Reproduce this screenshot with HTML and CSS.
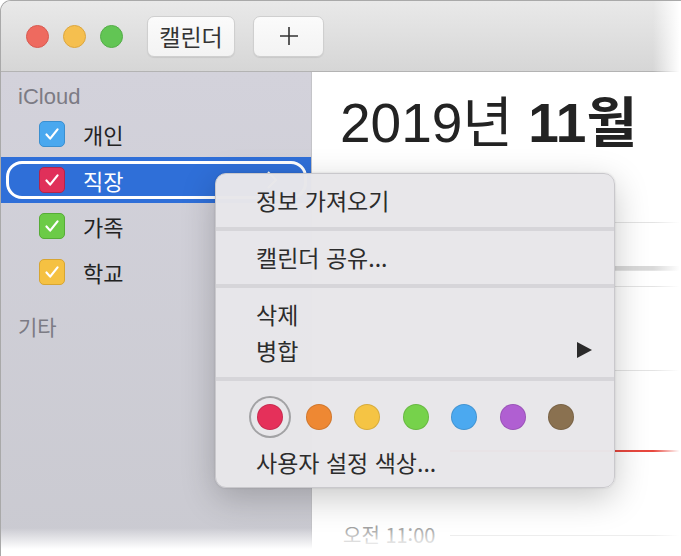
FILE: index.html
```html
<!DOCTYPE html>
<html lang="ko">
<head>
    <meta charset="UTF-8">
    <title>캘린더</title>
    <link rel="stylesheet" href="styles.css">
</head>
<body>
  <div class="window">
    <header class="titlebar">
      <div class="lights">
        <span class="light red"></span>
        <span class="light yellow"></span>
        <span class="light green"></span>
      </div>
      <button class="tb-btn cal-btn">캘린더</button>
      <button class="tb-btn add-btn">
        <svg width="22" height="22" viewBox="0 0 22 22"><path d="M11 2v18M2 11h18" stroke="#333" stroke-width="1.6" fill="none"/></svg>
      </button>
    </header>

    <div class="content">
      <aside class="sidebar">
        <div class="group-title">iCloud</div>
        <div class="cal-row">
          <span class="check blue"><svg viewBox="0 0 26 26"><path d="M7 13.5l4 4.5 8-10" /></svg></span>
          <span class="cal-name">개인</span>
        </div>
        <div class="cal-row selected">
          <span class="check red"><svg viewBox="0 0 26 26"><path d="M7 13.5l4 4.5 8-10" /></svg></span>
          <span class="cal-name">직장</span>
          <svg class="chevron" width="12" height="20" viewBox="0 0 12 20"><path d="M2 2l8 8-8 8" /></svg>
        </div>
        <div class="cal-row">
          <span class="check green"><svg viewBox="0 0 26 26"><path d="M7 13.5l4 4.5 8-10" /></svg></span>
          <span class="cal-name">가족</span>
        </div>
        <div class="cal-row">
          <span class="check yellow"><svg viewBox="0 0 26 26"><path d="M7 13.5l4 4.5 8-10" /></svg></span>
          <span class="cal-name">학교</span>
        </div>
        <div class="group-title other">기타</div>
      </aside>

      <main class="day-view">
        <h1 class="month-title">2019년 <b>11월</b></h1>
        <div class="all-day"></div>
        <div class="hour h1"></div>
        <div class="hour h2"></div>
        <div class="hour h3"></div>
        <div class="hour h4 now"></div>
        <div class="hour h5">
          <span class="time">오전 11:00</span>
        </div>
      </main>
    </div>

    <!-- context menu for 직장 -->
    <div class="menu">
      <div class="menu-item">정보 가져오기</div>
      <div class="menu-sep"></div>
      <div class="menu-item">캘린더 공유...</div>
      <div class="menu-sep"></div>
      <div class="menu-item">삭제</div>
      <div class="menu-item">병합 <span class="arrow"></span></div>
      <div class="menu-sep"></div>
      <div class="swatches">
        <span class="swatch current" style="background:#e5305a"></span>
        <span class="swatch" style="background:#ee8833"></span>
        <span class="swatch" style="background:#f5c444"></span>
        <span class="swatch" style="background:#76d24b"></span>
        <span class="swatch" style="background:#4ba9f0"></span>
        <span class="swatch" style="background:#b05fd2"></span>
        <span class="swatch" style="background:#8a7150"></span>
      </div>
      <div class="menu-item last">사용자 설정 색상...</div>
    </div>

    <div class="fade-right"></div>
    <div class="fade-bottom"></div>
  </div>
</body>
</html>
```

FILE: styles.css
```css
/* Page */
body {
  margin: 0;
  background: #fff;
  font-family: "Liberation Sans", "Noto Sans CJK KR", sans-serif;
  color: #222;
  width: 681px;
  height: 556px;
  overflow: hidden;
}

.window {
  position: relative;
  width: 681px;
  height: 556px;
  border-top-left-radius: 11px;
  border-left: 1px solid #a9a9a9;
  border-top: 1px solid #a9a9a9;
  box-sizing: border-box;
  overflow: hidden;
}

/* Title bar */
.titlebar {
  height: 70px;
  border-bottom: 1px solid #b3b3b3;
  background: linear-gradient(#e9e9e9, #d6d6d6);
  display: flex;
  align-items: center;
  padding-left: 25px;
}

.lights {
  display: flex;
  gap: 14px;
  margin-right: 24px;
}

.light {
  width: 23px;
  height: 23px;
  border-radius: 50%;
  box-sizing: border-box;
}

.light.red { background: #ee6a5f; border: 1px solid #d85a50; }
.light.yellow { background: #f5bf4f; border: 1px solid #dca63e; }
.light.green { background: #62c554; border: 1px solid #53ad47; }

.tb-btn {
  height: 41px;
  margin-right: 18px;
  border: 1px solid #cfcfcf;
  border-radius: 7px;
  background: linear-gradient(#fbfbfb, #f3f3f3);
  box-shadow: 0 1px 1px rgba(0,0,0,0.08);
  font-family: "Noto Sans CJK KR", sans-serif;
  font-size: 23px;
  color: #333;
  display: flex;
  align-items: center;
  justify-content: center;
  padding: 0;
}

.cal-btn { width: 88px; }
.add-btn { width: 71px; }

/* Body */
.content {
  display: flex;
  height: 484px;
}

.sidebar {
  width: 310px;
  background: linear-gradient(#d3d2db, #cacad1);
  border-right: 1px solid #c4c4c8;
  padding-top: 12px;
  font-family: "Noto Sans CJK KR", sans-serif;
}

.group-title {
  font-family: "Liberation Sans", "Noto Sans CJK KR", sans-serif;
  font-size: 22px;
  line-height: 26px;
  color: #7c7b84;
  padding-left: 17px;
  margin-bottom: 1px;
}

.group-title.other {
  font-family: "Noto Sans CJK KR", sans-serif;
  margin-top: 18px;
  font-size: 21px;
}

.cal-row {
  position: relative;
  height: 46px;
  display: flex;
  align-items: center;
  padding-left: 38px;
}

.cal-row.selected {
  background: #2f6fd8;
  color: #fff;
}

.cal-row.selected::after {
  content: "";
  position: absolute;
  top: 4px;
  bottom: 4px;
  left: 5px;
  right: 4px;
  border: 3px solid #fff;
  border-radius: 16px;
}

.check {
  width: 26px;
  height: 26px;
  border-radius: 5px;
  box-sizing: border-box;
  margin-right: 18px;
}

.check svg {
  display: block;
  width: 100%;
  height: 100%;
  fill: none;
  stroke: #fff;
  stroke-width: 2.4;
  stroke-linecap: round;
  stroke-linejoin: round;
}

.check.blue { background: #4aa8ef; border: 1px solid #3a8fd0; }
.check.red { background: #e0305a; border: 1px solid #b3244a; }
.check.green { background: #6ccb47; border: 1px solid #56ac37; }
.check.yellow { background: #f5c142; border: 1px solid #d7a532; }

.cal-name {
  font-size: 22px;
}

.chevron {
  margin-left: auto;
  margin-right: 33px;
  fill: none;
  stroke: #fff;
  stroke-width: 2;
}

/* Day view */
.day-view {
  flex: 1;
  background: #fff;
}

.month-title {
  margin: 0;
  height: 150px;
  box-sizing: border-box;
  padding: 20px 0 0 28px;
  font-size: 55px;
  line-height: 62px;
  font-weight: normal;
  color: #232323;
}

.month-title b {
  font-weight: bold;
}

.all-day {
  height: 43px;
  border-top: 1px solid #e3e3e3;
  border-bottom: 4px solid #d9d9d9;
}

.hour {
  margin-left: 138px;
  border-top: 1px solid #e3e3e3;
  position: relative;
}

.h1 { height: 15px; }
.h2 { height: 83px; }
.h3 { height: 79px; }
.h4 { height: 83px; }

.hour.now {
  border-top: 2px solid #e8473e;
}

.hour.h5 {
  height: 40px;
  margin-left: 0;
  border-top: none;
  display: flex;
}

.h5::after {
  content: "";
  flex: 1;
  border-top: 1px solid #e3e3e3;
}

.time {
  width: 138px;
  box-sizing: border-box;
  padding-left: 31px;
  margin-top: -13px;
  font-family: "Noto Sans CJK KR", sans-serif;
  font-size: 20px;
  line-height: 26px;
  color: #a3a3a3;
}

/* Context menu */
.menu {
  position: absolute;
  left: 214px;
  top: 172px;
  width: 400px;
  box-sizing: border-box;
  padding: 8px 0 7px;
  background: rgba(232, 231, 234, 0.98);
  border: 1px solid #c9c8cc;
  border-radius: 11px;
  box-shadow: 0 10px 34px rgba(0,0,0,0.22), 0 0 2px rgba(0,0,0,0.15);
  font-family: "Noto Sans CJK KR", sans-serif;
  font-size: 23px;
  color: #2c2c2c;
}

.menu-item {
  height: 36px;
  line-height: 36px;
  padding-left: 40px;
  padding-right: 22px;
  display: flex;
  align-items: center;
}

.menu-item.last {
  margin-top: 7px;
}

.menu-sep {
  height: 4px;
  background: #d6d5d9;
  margin: 9px 0 8px;
}

.arrow {
  margin-left: auto;
  width: 0;
  height: 0;
  border-top: 8px solid transparent;
  border-bottom: 8px solid transparent;
  border-left: 15px solid #2a2a2a;
}

.swatches {
  display: flex;
  gap: 22.5px;
  padding-left: 41px;
  margin-top: 16px;
  height: 40px;
  align-items: center;
}

.swatch {
  width: 26px;
  height: 26px;
  border-radius: 50%;
  box-sizing: border-box;
  border: 1px solid rgba(0,0,0,0.12);
}

.swatch.current {
  box-shadow: 0 0 0 6px #e8e7ea, 0 0 0 8px #a2a2a4;
}

/* Screenshot edge fades */
.fade-right {
  position: absolute;
  top: 0;
  right: 0;
  width: 28px;
  height: 100%;
  background: linear-gradient(90deg, rgba(255,255,255,0), #fff 95%);
}

.fade-bottom {
  position: absolute;
  left: 0;
  bottom: 0;
  width: 100%;
  height: 28px;
  background: linear-gradient(rgba(255,255,255,0), #fff 75%);
}
```
